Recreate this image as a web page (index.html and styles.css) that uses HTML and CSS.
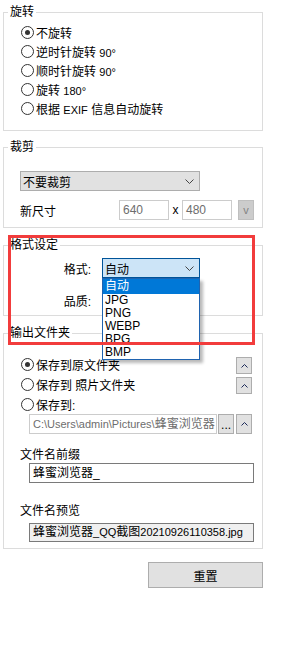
FILE: index.html
```html
<!DOCTYPE html>
<html lang="zh-CN">
<head>
<meta charset="utf-8">
<title>设置</title>
<link rel="stylesheet" href="styles.css">
</head>
<body>
<div class="page">
  <fieldset class="group">
    <legend>旋转</legend>
    <div class="rot-body">
      <div class="radio checked"><span class="circle"></span><span>不旋转</span></div>
      <div class="radio"><span class="circle"></span><span>逆时针旋转 <span class="lat">90°</span></span></div>
      <div class="radio"><span class="circle"></span><span>顺时针旋转 <span class="lat">90°</span></span></div>
      <div class="radio"><span class="circle"></span><span>旋转 <span class="lat">180°</span></span></div>
      <div class="radio"><span class="circle"></span><span>根据 <span class="lat">EXIF</span> 信息自动旋转</span></div>
    </div>
  </fieldset>

  <fieldset class="group g-crop">
    <legend>裁剪</legend>
    <div class="crop-body">
      <div class="combo crop-combo">
        <span>不要裁剪</span>
        <svg class="chev" width="9" height="5" viewBox="0 0 9 5"><polyline points="0.5,0.5 4.5,4.5 8.5,0.5" fill="none" stroke="#444" stroke-width="1"/></svg>
      </div>
      <div class="size-row">
        <span class="size-label">新尺寸</span>
        <span class="num-input">640</span>
        <span class="times">x</span>
        <span class="num-input">480</span>
        <span class="v-btn">v</span>
      </div>
    </div>
  </fieldset>

  <fieldset class="group g-format">
    <legend>格式设定</legend>
    <div class="fmt-body">
      <div class="fmt-row">
        <span class="fmt-label">格式:</span>
        <div class="combo fmt-combo">
          <span>自动</span>
          <svg class="chev" width="9" height="5" viewBox="0 0 9 5"><polyline points="0.5,0.5 4.5,4.5 8.5,0.5" fill="none" stroke="#444" stroke-width="1"/></svg>
          <ul class="dropdown">
            <li class="sel">自动</li>
            <li>JPG</li>
            <li>PNG</li>
            <li>WEBP</li>
            <li>BPG</li>
            <li>BMP</li>
          </ul>
        </div>
      </div>
      <div class="fmt-row">
        <span class="fmt-label">品质:</span>
      </div>
    </div>
  </fieldset>

  <fieldset class="group g-out">
    <legend>输出文件夹</legend>
    <div class="out-body">
      <div class="out-row">
        <div class="radio checked"><span class="circle"></span><span>保存到原文件夹</span></div>
        <span class="btn up-btn"><svg width="7" height="4" viewBox="0 0 7 4"><polyline points="0.5,3.5 3.5,0.5 6.5,3.5" fill="none" stroke="#1c2a5a" stroke-width="1"/></svg></span>
      </div>
      <div class="out-row">
        <div class="radio"><span class="circle"></span><span>保存到 照片文件夹</span></div>
        <span class="btn up-btn"><svg width="7" height="4" viewBox="0 0 7 4"><polyline points="0.5,3.5 3.5,0.5 6.5,3.5" fill="none" stroke="#1c2a5a" stroke-width="1"/></svg></span>
      </div>
      <div class="out-row">
        <div class="radio"><span class="circle"></span><span>保存到:</span></div>
      </div>
      <div class="path-row">
        <span class="path-input"><span class="lat">C:\Users\admin\Pictures\</span>蜂蜜浏览器</span>
        <span class="btn dots-btn">...</span>
        <span class="btn up-btn path-up"><svg width="7" height="4" viewBox="0 0 7 4"><polyline points="0.5,3.5 3.5,0.5 6.5,3.5" fill="none" stroke="#1c2a5a" stroke-width="1"/></svg></span>
      </div>
      <div class="field-label first">文件名前缀</div>
      <div class="text-input">蜂蜜浏览器_</div>
      <div class="field-label second">文件名预览</div>
      <div class="text-input preview">蜂蜜浏览器<span class="lat">_QQ</span>截图<span class="lat">20210926110358.jpg</span></div>
    </div>
  </fieldset>

  <div class="actions">
    <span class="btn reset-btn">重置</span>
  </div>

  <div class="red-box"></div>
</div>
</body>
</html>
```

FILE: styles.css
```css
html, body {
  margin: 0;
  padding: 0;
  background: #ffffff;
}
body {
  font-family: "Liberation Sans", "Noto Sans CJK SC", sans-serif;
  font-size: 12px;
  color: #000;
}
.page {
  position: relative;
  width: 286px;
  height: 648px;
  padding-top: 4px;
  box-sizing: border-box;
}
.group {
  width: 260px;
  box-sizing: border-box;
  margin: 0 0 0 3px;
  padding: 0;
  border: 1px solid #dcdcdc;
  min-width: 0;
}
.group legend {
  margin-left: 4px;
  padding: 0 2px;
  height: 16px;
  line-height: 16px;
}
.g-crop {
  margin-top: 8px;
}
.g-format, .g-out {
  margin-top: 9px;
}

/* radios */
.radio {
  display: flex;
  align-items: center;
  height: 19px;
  margin-left: 1px;
  white-space: nowrap;
}
.circle {
  width: 13px;
  height: 13px;
  box-sizing: border-box;
  border: 1px solid #333;
  border-radius: 50%;
  background: #fff;
  margin-right: 2px;
  position: relative;
  flex: none;
}
.radio.checked .circle::after {
  content: "";
  position: absolute;
  left: 3px;
  top: 3px;
  width: 5px;
  height: 5px;
  border-radius: 50%;
  background: #333;
}
.lat {
  font-size: 11px;
}
.rot-body {
  padding: 3px 0 12px 16px;
}

/* crop */
.crop-body {
  padding: 16px 0 7px 16px;
}
.combo {
  height: 20px;
  box-sizing: border-box;
  display: flex;
  align-items: center;
  justify-content: space-between;
  padding: 0 5px 0 2px;
}
.crop-combo {
  width: 180px;
  background: #e1e1e1;
  border: 1px solid #adadad;
}
.size-row {
  display: flex;
  align-items: center;
  height: 20px;
  margin-top: 9px;
}
.size-label {
  width: 99px;
}
.num-input {
  width: 50px;
  height: 20px;
  box-sizing: border-box;
  border: 1px solid #cccccc;
  color: #6d6d6d;
  padding-left: 3px;
  line-height: 18px;
}
.times {
  width: 13px;
  text-align: center;
}
.v-btn {
  margin-left: 6px;
  width: 16px;
  height: 20px;
  box-sizing: border-box;
  background: #cccccc;
  border: 1px solid #bfbfbf;
  color: #838383;
  text-align: center;
  line-height: 18px;
  font-size: 11px;
}

/* format */
.fmt-body {
  padding: 5px 0 5px 16px;
}
.fmt-row {
  display: flex;
  align-items: center;
  height: 20px;
}
.fmt-row + .fmt-row {
  margin-top: 12px;
}
.fmt-label {
  width: 71px;
  text-align: right;
  margin-right: 11px;
}
.fmt-combo {
  width: 98px;
  background: #cce4f7;
  border: 1px solid #005499;
  position: relative;
}
.dropdown {
  position: absolute;
  top: 19px;
  left: -1px;
  width: 98px;
  box-sizing: border-box;
  margin: 0;
  padding: 0;
  list-style: none;
  background: #fff;
  border: 1px solid #1f63b0;
  box-shadow: 3px 3px 3px rgba(0, 0, 0, 0.28);
  z-index: 3;
}
.dropdown li {
  height: 13px;
  line-height: 13px;
  padding-left: 2px;
}
.dropdown li.sel {
  height: 15px;
  line-height: 15px;
  background: #0078d7;
  color: #fff;
}

/* output */
.out-body {
  padding: 13px 8px 6px 16px;
}
.out-row {
  display: flex;
  justify-content: space-between;
  height: 20px;
}
.out-row .radio {
  height: 20px;
}
.btn {
  box-sizing: border-box;
  background: #e1e1e1;
  border: 1px solid #adadad;
  display: flex;
  align-items: center;
  justify-content: center;
}
.up-btn {
  width: 16px;
  height: 17px;
  margin-top: 3px;
  margin-right: 2px;
}
.path-row {
  display: flex;
  height: 20px;
  margin-left: 9px;
}
.path-input {
  width: 189px;
  height: 20px;
  box-sizing: border-box;
  border: 1px solid #cccccc;
  color: #6d6d6d;
  padding-left: 3px;
  line-height: 18px;
  white-space: nowrap;
  overflow: hidden;
}
.dots-btn {
  width: 16px;
  height: 20px;
  margin-left: 1px;
  align-items: flex-end;
  line-height: 14px;
  padding-bottom: 1px;
}
.path-up {
  height: 20px;
  margin-top: 0;
  margin-left: 2px;
}
.field-label {
  height: 16px;
  line-height: 16px;
}
.field-label.first {
  margin-top: 13px;
}
.field-label.second {
  margin-top: 20px;
}
.text-input {
  margin-left: 9px;
  height: 20px;
  box-sizing: border-box;
  border: 1px solid #7a7a7a;
  padding-left: 3px;
  line-height: 18px;
  white-space: nowrap;
  overflow: hidden;
}
.text-input.preview {
  margin-top: 4px;
  height: 19px;
  line-height: 17px;
  background: #f0f0f0;
}

/* reset */
.actions {
  width: 260px;
  margin: 13px 0 0 3px;
  display: flex;
  justify-content: flex-end;
}
.reset-btn {
  width: 115px;
  height: 26px;
  font-size: 12px;
}

.red-box {
  position: absolute;
  left: 8px;
  top: 235px;
  width: 247px;
  height: 110px;
  box-sizing: border-box;
  border: 3px solid #f23c3c;
  z-index: 5;
}
```
